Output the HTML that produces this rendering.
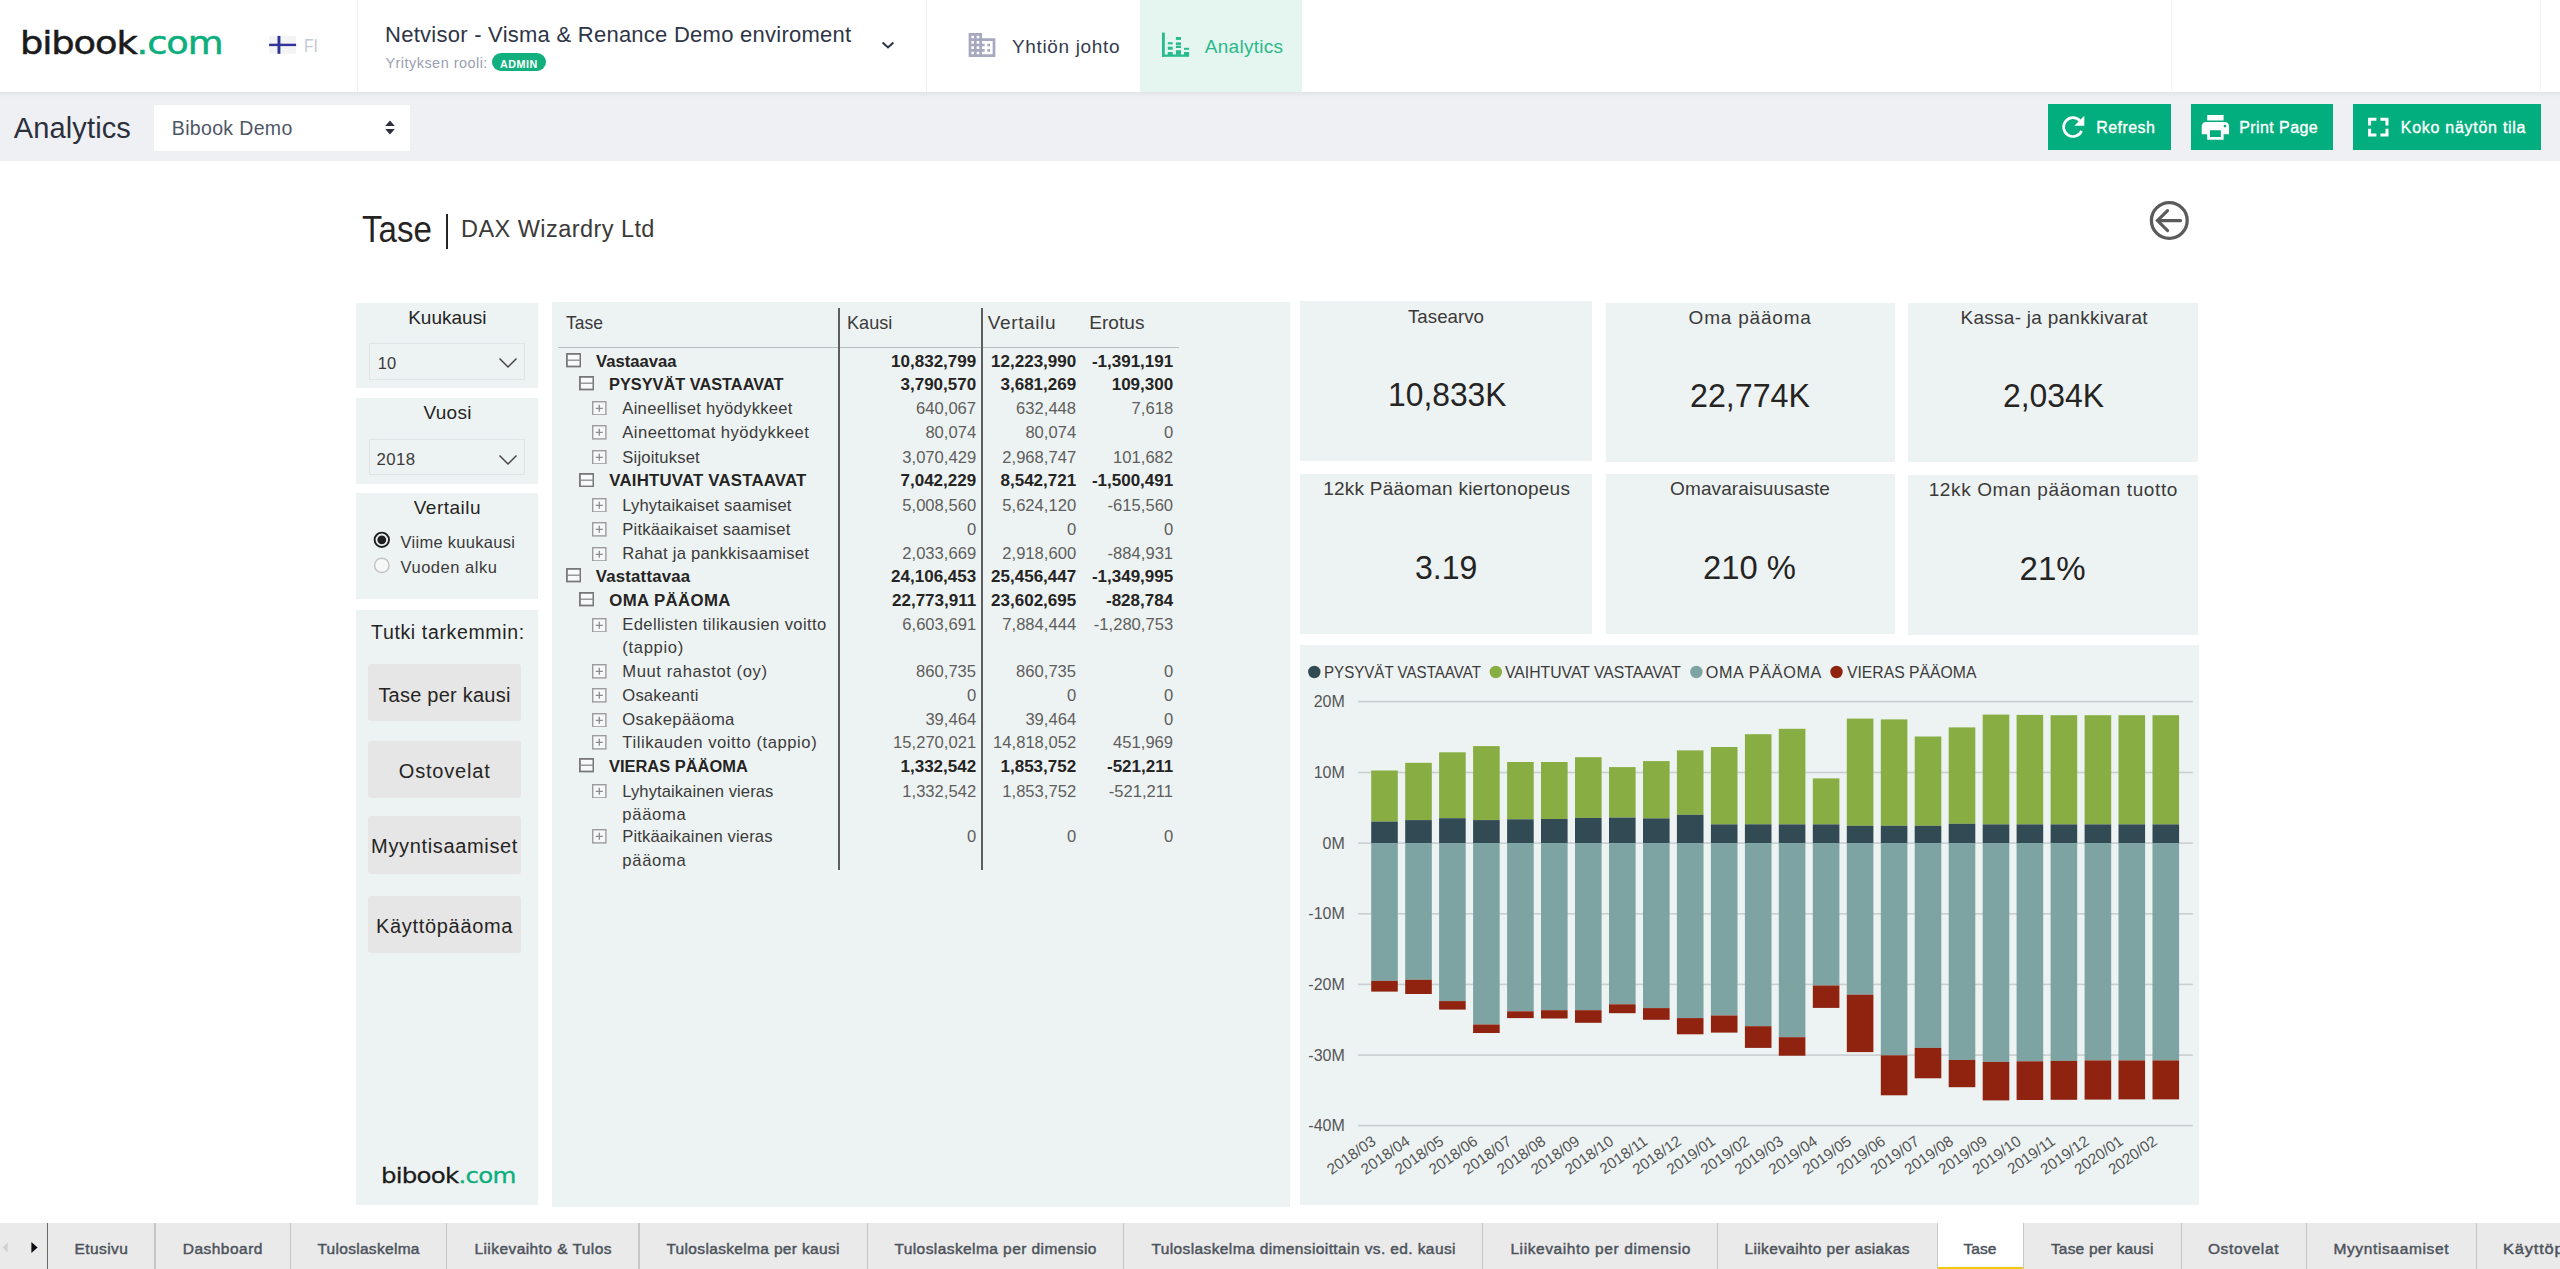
<!DOCTYPE html>
<html lang="fi"><head><meta charset="utf-8"><title>bibook.com – Analytics – Tase</title>
<style>
html,body{margin:0;padding:0}
body{width:2560px;height:1269px;overflow:hidden;background:#fff;position:relative;font-family:"Liberation Sans", sans-serif;}
.abs{position:absolute;display:block}
.t{position:absolute;white-space:pre;line-height:1;transform-origin:0 0}
header,nav,main,section,footer{display:block}
</style></head><body>
<!--HEADER-->
<header>
<div class="abs" style="left:0px;top:0px;width:2560.0px;height:92.0px;background:#fff;"></div>
<div class="abs" style="left:1140px;top:0px;width:162.0px;height:92.0px;background:#e5f6f0;"></div>
<div class="abs" style="left:356.5px;top:0px;width:1.3px;height:92.0px;background:#eef0f4;"></div>
<div class="abs" style="left:925.8px;top:0px;width:1.2px;height:92.0px;background:#eef0f4;"></div>
<div class="abs" style="left:2170.5px;top:0px;width:1.0px;height:92.0px;background:#f4f5f8;"></div>
<div class="abs" style="left:2540px;top:0px;width:1.0px;height:92.0px;background:#f4f5f8;"></div>
<span class="t" style="left:20.1px;top:26.5px;font-size:32.6px;letter-spacing:-0.991px;color:#1b1b1b;-webkit-text-stroke-width:0.5px;transform:scaleX(1.1300);font-family:'DejaVu Sans','Liberation Sans',sans-serif;">bibook<span style="color:#0bae7c">.com</span></span>
<!--flag-->
<svg class="abs" style="left:269px;top:35px" width="28" height="20" viewBox="269 35 28 20"><rect x="269.1" y="35.9" width="27" height="17.9" fill="#f4f4f5"/><rect x="277.5" y="35.9" width="2.9" height="17.9" fill="#30349a"/><rect x="269.1" y="43.7" width="27" height="2.4" fill="#30349a"/></svg>
<!--chevron-->
<svg class="abs" style="left:880px;top:39px" width="16" height="12" viewBox="0 0 16 12"><path d="M2.6 3.4L8 8.4L13.4 3.4" fill="none" stroke="#2f3546" stroke-width="2.1"/></svg>
<svg class="abs" style="left:966.4px;top:28.6px" width="32" height="32" viewBox="0 0 24 24"><path fill="#a5a8be" d="M12 7V3H2v18h20V7H12zM6 19H4v-2h2v2zm0-4H4v-2h2v2zm0-4H4V9h2v2zm0-4H4V5h2v2zm4 12H8v-2h2v2zm0-4H8v-2h2v2zm0-4H8V9h2v2zm0-4H8V5h2v2zm10 12h-8v-2h2v-2h-2v-2h2v-2h-2V9h8v10zm-2-8h-2v2h2v-2zm0 4h-2v2h2v-2z"/></svg>
<svg class="abs" style="left:1160px;top:31px" width="32" height="28" viewBox="1160 31 32 28"><g fill="#27bb8e"><rect x="1162" y="32.6" width="2.8" height="24.2"/><rect x="1162" y="54.5" width="27.1" height="2.3"/><rect x="1167.8" y="42.2" width="4.9" height="2.1"/><rect x="1167.8" y="46.7" width="4.9" height="3"/><rect x="1167.8" y="52" width="4.9" height="3"/><rect x="1175.9" y="37" width="5.1" height="2.9"/><rect x="1175.9" y="42.4" width="5.1" height="2.5"/><rect x="1175.9" y="45.6" width="5.1" height="2.4"/><rect x="1175.9" y="50.2" width="5.1" height="4.6"/><rect x="1184" y="47.8" width="5.1" height="2"/><rect x="1184" y="52" width="5.1" height="3"/></g></svg>
<div class="abs" style="left:492px;top:53px;width:54.0px;height:18.0px;background:#12b07e;border-radius:9px"></div>
<span class="t" style="left:385.1px;top:24.0px;font-size:22px;letter-spacing:0.253px;color:#2f3546;">Netvisor - Visma &amp; Renance Demo enviroment</span>
<span class="t" style="left:385.4px;top:55.5px;font-size:14.5px;letter-spacing:0.461px;color:#9aa0b1;">Yrityksen rooli:</span>
<span class="t" style="left:500.1px;top:59.6px;font-size:10px;font-weight:700;letter-spacing:0.500px;color:#ffffff;transform:scaleX(1.0710);">ADMIN</span>
<span class="t" style="left:303.7px;top:37.4px;font-size:18.3px;color:#c3c9d6;transform:scaleX(0.8484);">FI</span>
<span class="t" style="left:1011.9px;top:36.5px;font-size:19px;letter-spacing:0.661px;color:#353b4e;">Yhtiön johto</span>
<span class="t" style="left:1204.7px;top:36.5px;font-size:19px;letter-spacing:0.300px;color:#2bb98a;">Analytics</span>
</header>
<!--TOOLBAR-->
<nav>
<div class="abs" style="left:0px;top:91.7px;width:2560.0px;height:69.5px;background:#eef0f4;"></div>
<div class="abs" style="left:0px;top:91.7px;width:2560.0px;height:5.3px;background:transparent;background:linear-gradient(rgba(40,50,80,.065),rgba(40,50,80,0))"></div>
<div class="abs" style="left:154px;top:105.4px;width:256.0px;height:45.2px;background:#fff;"></div>
<svg class="abs" style="left:384px;top:119px" width="12" height="17" viewBox="0 0 12 17"><path d="M1.2 7L6 1.6L10.8 7ZM1.2 10L6 15.4L10.8 10Z" fill="#2b303b"/></svg>
<div class="abs" style="left:2048px;top:104px;width:123.3px;height:45.7px;background:#02ae7d;"></div>
<div class="abs" style="left:2191.2px;top:104px;width:142.1px;height:45.7px;background:#02ae7d;"></div>
<div class="abs" style="left:2353px;top:104px;width:187.6px;height:45.7px;background:#02ae7d;"></div>
<svg class="abs" style="left:2058px;top:112px" width="30" height="30" viewBox="2058 112 30 30"><path d="M2080.0 120.8A9.4 9.4 0 1 0 2081.6 130.9" fill="none" stroke="#fff" stroke-width="2.7"/><path d="M2084.3 115.8V125.7H2074.4Z" fill="#fff"/></svg>
<svg class="abs" style="left:2199.4px;top:111px" width="32.8" height="32.8" viewBox="0 0 24 24"><path fill="#fff" d="M19 8H5c-1.66 0-3 1.34-3 3v6h4v4h12v-4h4v-6c0-1.66-1.34-3-3-3zm-3 11H8v-5h8v5zm3-7c-.55 0-1-.45-1-1s.45-1 1-1 1 .45 1 1-.45 1-1 1zm-1-9H6v4h12V3z"/></svg>
<svg class="abs" style="left:2364px;top:114px" width="28" height="26" viewBox="2364 114 28 26"><path d="M2369.6 125.6V119.3H2376.4M2380.4 119.3H2387V125.6M2387 128.8V134.9H2380.4M2376.4 134.9H2369.6V128.8" fill="none" stroke="#fff" stroke-width="3"/></svg>
<span class="t" style="left:13.8px;top:114.0px;font-size:29px;letter-spacing:0.123px;color:#2b303b;">Analytics</span>
<span class="t" style="left:171.8px;top:119.0px;font-size:19.5px;letter-spacing:0.340px;color:#4e5666;">Bibook Demo</span>
<span class="t" style="left:2096.2px;top:120.4px;font-size:16px;letter-spacing:0.431px;color:#ffffff;-webkit-text-stroke-width:0.35px;">Refresh</span>
<span class="t" style="left:2239.2px;top:120.4px;font-size:16px;letter-spacing:0.422px;color:#ffffff;-webkit-text-stroke-width:0.35px;">Print Page</span>
<span class="t" style="left:2400.8px;top:120.4px;font-size:16px;letter-spacing:0.724px;color:#ffffff;-webkit-text-stroke-width:0.35px;">Koko näytön tila</span>
</nav>
<main>
<!--TITLE-->
<div class="abs" style="left:445.6px;top:213.8px;width:2.2px;height:35.5px;background:#252423;"></div>
<svg class="abs" style="left:2147px;top:198px" width="45" height="45" viewBox="2147 198 45 45"><circle cx="2169.3" cy="220.5" r="17.9" fill="none" stroke="#5b5b5b" stroke-width="3.3"/><path d="M2180.6 220.6H2157.6M2167.6 210.6L2157.4 220.6L2167.6 230.6" fill="none" stroke="#5b5b5b" stroke-width="3.1" stroke-linecap="round" stroke-linejoin="miter"/></svg>
<!--SLICERS-->
<section>
<div class="abs" style="left:356px;top:302.5px;width:181.5px;height:85.5px;background:#edf3f3;"></div>
<div class="abs" style="left:369px;top:343.3px;width:155.8px;height:37.0px;background:transparent;box-sizing:border-box;border:1px solid #dfe5e7"></div>
<div class="abs" style="left:356px;top:398.4px;width:181.5px;height:85.7px;background:#edf3f3;"></div>
<div class="abs" style="left:369px;top:439.4px;width:155.8px;height:36.0px;background:transparent;box-sizing:border-box;border:1px solid #dfe5e7"></div>
<div class="abs" style="left:356px;top:492.7px;width:181.5px;height:106.1px;background:#edf3f3;"></div>
<div class="abs" style="left:356px;top:610px;width:181.5px;height:595.3px;background:#edf3f3;"></div>
<div class="abs" style="left:368px;top:664.2px;width:153.3px;height:56.8px;background:#e6e6e6;border-radius:3px"></div>
<div class="abs" style="left:368px;top:740.9px;width:153.3px;height:57.4px;background:#e6e6e6;border-radius:3px"></div>
<div class="abs" style="left:368px;top:816.4px;width:153.3px;height:57.2px;background:#e6e6e6;border-radius:3px"></div>
<div class="abs" style="left:368px;top:896px;width:153.3px;height:56.9px;background:#e6e6e6;border-radius:3px"></div>
<svg class="abs" style="left:497px;top:355px" width="22" height="15" viewBox="0 0 22 15"><path d="M2.5 3.5L11 12L19.5 3.5" fill="none" stroke="#484644" stroke-width="1.5"/></svg>
<svg class="abs" style="left:496.5px;top:451.5px" width="22" height="15" viewBox="0 0 22 15"><path d="M2.5 3.5L11 12L19.5 3.5" fill="none" stroke="#484644" stroke-width="1.5"/></svg>
<svg class="abs" style="left:372px;top:530px" width="20" height="46" viewBox="372 530 20 46"><circle cx="381.8" cy="539.8" r="7.2" fill="#edf3f3" stroke="#1f1f1f" stroke-width="1.9"/><circle cx="381.8" cy="539.8" r="4.4" fill="#1f1f1f"/><circle cx="381.8" cy="565.4" r="7.2" fill="#f6f8f8" stroke="#c4c4c4" stroke-width="1.5"/></svg>
<span class="t" style="left:362.1px;top:210.5px;font-size:37.5px;color:#252423;transform:scaleX(0.8826);">Tase</span>
<span class="t" style="left:461.1px;top:218.2px;font-size:23.5px;letter-spacing:0.440px;color:#3b3a39;">DAX Wizardry Ltd</span>
<span class="t" style="left:408.2px;top:307.5px;font-size:19px;color:#252423;">Kuukausi</span>
<span class="t" style="left:377.8px;top:355.2px;font-size:16.5px;color:#3b3a39;">10</span>
<span class="t" style="left:423.4px;top:402.9px;font-size:19px;letter-spacing:0.300px;color:#252423;">Vuosi</span>
<span class="t" style="left:376.5px;top:452.0px;font-size:16.8px;letter-spacing:0.377px;color:#3b3a39;">2018</span>
<span class="t" style="left:413.7px;top:497.6px;font-size:19px;letter-spacing:0.508px;color:#252423;">Vertailu</span>
<span class="t" style="left:400.5px;top:533.6px;font-size:16.5px;letter-spacing:0.291px;color:#3b3a39;">Viime kuukausi</span>
<span class="t" style="left:400.5px;top:559.0px;font-size:16.5px;letter-spacing:0.531px;color:#3b3a39;">Vuoden alku</span>
<span class="t" style="left:371.1px;top:622.8px;font-size:19.5px;letter-spacing:0.638px;color:#252423;">Tutki tarkemmin:</span>
<span class="t" style="left:378.4px;top:684.5px;font-size:20px;letter-spacing:0.233px;color:#252423;">Tase per kausi</span>
<span class="t" style="left:398.8px;top:760.9px;font-size:20px;letter-spacing:0.802px;color:#252423;">Ostovelat</span>
<span class="t" style="left:371.1px;top:836.2px;font-size:20px;letter-spacing:0.653px;color:#252423;">Myyntisaamiset</span>
<span class="t" style="left:376.0px;top:915.5px;font-size:20px;letter-spacing:0.683px;color:#252423;">Käyttöpääoma</span>
<span class="t" style="left:380.9px;top:1164.6px;font-size:21.7px;letter-spacing:-0.681px;color:#1b1b1b;-webkit-text-stroke-width:0.3px;transform:scaleX(1.1300);font-family:'DejaVu Sans','Liberation Sans',sans-serif;">bibook<span style="color:#0bae7c">.com</span></span>
</section>
<!--TABLE-->
<section>
<div class="abs" style="left:551.5px;top:301.5px;width:738.5px;height:905.5px;background:#edf3f3;"></div>
<div class="abs" style="left:558px;top:346.7px;width:621.3px;height:1.3px;background:#b9bfc1;"></div>
<div class="abs" style="left:837.7px;top:307.8px;width:2.1px;height:562.0px;background:#5e5e5e;"></div>
<div class="abs" style="left:981.2px;top:307.8px;width:2.1px;height:562.0px;background:#5e5e5e;"></div>
<svg class="abs" style="left:565.7px;top:353.2px" width="15.3" height="14.4" viewBox="0 0 15.3 14.4"><rect x="0.9" y="0.9" width="13.5" height="12.6" fill="#f7fafa" stroke="#787878" stroke-width="1.8"/><path d="M1 7.2H14.3" stroke="#8a8a8a" stroke-width="1.3"/></svg>
<svg class="abs" style="left:579.0px;top:376.3px" width="15.3" height="14.4" viewBox="0 0 15.3 14.4"><rect x="0.9" y="0.9" width="13.5" height="12.6" fill="#f7fafa" stroke="#787878" stroke-width="1.8"/><path d="M1 7.2H14.3" stroke="#8a8a8a" stroke-width="1.3"/></svg>
<svg class="abs" style="left:592.3px;top:400.7px" width="14.6" height="14.6" viewBox="0 0 14.6 14.6"><rect x="0.7" y="0.7" width="13.2" height="13.2" fill="#f5f8f8" stroke="#9c9c9c" stroke-width="1.4"/><path d="M3.8 7.3H10.8M7.3 3.8V10.8" stroke="#8c8c8c" stroke-width="1.3"/></svg>
<svg class="abs" style="left:592.3px;top:425.4px" width="14.6" height="14.6" viewBox="0 0 14.6 14.6"><rect x="0.7" y="0.7" width="13.2" height="13.2" fill="#f5f8f8" stroke="#9c9c9c" stroke-width="1.4"/><path d="M3.8 7.3H10.8M7.3 3.8V10.8" stroke="#8c8c8c" stroke-width="1.3"/></svg>
<svg class="abs" style="left:592.3px;top:449.8px" width="14.6" height="14.6" viewBox="0 0 14.6 14.6"><rect x="0.7" y="0.7" width="13.2" height="13.2" fill="#f5f8f8" stroke="#9c9c9c" stroke-width="1.4"/><path d="M3.8 7.3H10.8M7.3 3.8V10.8" stroke="#8c8c8c" stroke-width="1.3"/></svg>
<svg class="abs" style="left:579.0px;top:472.8px" width="15.3" height="14.4" viewBox="0 0 15.3 14.4"><rect x="0.9" y="0.9" width="13.5" height="12.6" fill="#f7fafa" stroke="#787878" stroke-width="1.8"/><path d="M1 7.2H14.3" stroke="#8a8a8a" stroke-width="1.3"/></svg>
<svg class="abs" style="left:592.3px;top:497.9px" width="14.6" height="14.6" viewBox="0 0 14.6 14.6"><rect x="0.7" y="0.7" width="13.2" height="13.2" fill="#f5f8f8" stroke="#9c9c9c" stroke-width="1.4"/><path d="M3.8 7.3H10.8M7.3 3.8V10.8" stroke="#8c8c8c" stroke-width="1.3"/></svg>
<svg class="abs" style="left:592.3px;top:522.4px" width="14.6" height="14.6" viewBox="0 0 14.6 14.6"><rect x="0.7" y="0.7" width="13.2" height="13.2" fill="#f5f8f8" stroke="#9c9c9c" stroke-width="1.4"/><path d="M3.8 7.3H10.8M7.3 3.8V10.8" stroke="#8c8c8c" stroke-width="1.3"/></svg>
<svg class="abs" style="left:592.3px;top:546.5px" width="14.6" height="14.6" viewBox="0 0 14.6 14.6"><rect x="0.7" y="0.7" width="13.2" height="13.2" fill="#f5f8f8" stroke="#9c9c9c" stroke-width="1.4"/><path d="M3.8 7.3H10.8M7.3 3.8V10.8" stroke="#8c8c8c" stroke-width="1.3"/></svg>
<svg class="abs" style="left:565.7px;top:568.3px" width="15.3" height="14.4" viewBox="0 0 15.3 14.4"><rect x="0.9" y="0.9" width="13.5" height="12.6" fill="#f7fafa" stroke="#787878" stroke-width="1.8"/><path d="M1 7.2H14.3" stroke="#8a8a8a" stroke-width="1.3"/></svg>
<svg class="abs" style="left:579.0px;top:592.2px" width="15.3" height="14.4" viewBox="0 0 15.3 14.4"><rect x="0.9" y="0.9" width="13.5" height="12.6" fill="#f7fafa" stroke="#787878" stroke-width="1.8"/><path d="M1 7.2H14.3" stroke="#8a8a8a" stroke-width="1.3"/></svg>
<svg class="abs" style="left:592.3px;top:617.6px" width="14.6" height="14.6" viewBox="0 0 14.6 14.6"><rect x="0.7" y="0.7" width="13.2" height="13.2" fill="#f5f8f8" stroke="#9c9c9c" stroke-width="1.4"/><path d="M3.8 7.3H10.8M7.3 3.8V10.8" stroke="#8c8c8c" stroke-width="1.3"/></svg>
<svg class="abs" style="left:592.3px;top:664.0px" width="14.6" height="14.6" viewBox="0 0 14.6 14.6"><rect x="0.7" y="0.7" width="13.2" height="13.2" fill="#f5f8f8" stroke="#9c9c9c" stroke-width="1.4"/><path d="M3.8 7.3H10.8M7.3 3.8V10.8" stroke="#8c8c8c" stroke-width="1.3"/></svg>
<svg class="abs" style="left:592.3px;top:688.3px" width="14.6" height="14.6" viewBox="0 0 14.6 14.6"><rect x="0.7" y="0.7" width="13.2" height="13.2" fill="#f5f8f8" stroke="#9c9c9c" stroke-width="1.4"/><path d="M3.8 7.3H10.8M7.3 3.8V10.8" stroke="#8c8c8c" stroke-width="1.3"/></svg>
<svg class="abs" style="left:592.3px;top:712.6px" width="14.6" height="14.6" viewBox="0 0 14.6 14.6"><rect x="0.7" y="0.7" width="13.2" height="13.2" fill="#f5f8f8" stroke="#9c9c9c" stroke-width="1.4"/><path d="M3.8 7.3H10.8M7.3 3.8V10.8" stroke="#8c8c8c" stroke-width="1.3"/></svg>
<svg class="abs" style="left:592.3px;top:735.2px" width="14.6" height="14.6" viewBox="0 0 14.6 14.6"><rect x="0.7" y="0.7" width="13.2" height="13.2" fill="#f5f8f8" stroke="#9c9c9c" stroke-width="1.4"/><path d="M3.8 7.3H10.8M7.3 3.8V10.8" stroke="#8c8c8c" stroke-width="1.3"/></svg>
<svg class="abs" style="left:579.0px;top:758.4px" width="15.3" height="14.4" viewBox="0 0 15.3 14.4"><rect x="0.9" y="0.9" width="13.5" height="12.6" fill="#f7fafa" stroke="#787878" stroke-width="1.8"/><path d="M1 7.2H14.3" stroke="#8a8a8a" stroke-width="1.3"/></svg>
<svg class="abs" style="left:592.3px;top:783.7px" width="14.6" height="14.6" viewBox="0 0 14.6 14.6"><rect x="0.7" y="0.7" width="13.2" height="13.2" fill="#f5f8f8" stroke="#9c9c9c" stroke-width="1.4"/><path d="M3.8 7.3H10.8M7.3 3.8V10.8" stroke="#8c8c8c" stroke-width="1.3"/></svg>
<svg class="abs" style="left:592.3px;top:829.3px" width="14.6" height="14.6" viewBox="0 0 14.6 14.6"><rect x="0.7" y="0.7" width="13.2" height="13.2" fill="#f5f8f8" stroke="#9c9c9c" stroke-width="1.4"/><path d="M3.8 7.3H10.8M7.3 3.8V10.8" stroke="#8c8c8c" stroke-width="1.3"/></svg>
<span class="t" style="left:565.6px;top:312.6px;font-size:19px;color:#3b3a39;transform:scaleX(0.9199);">Tase</span>
<span class="t" style="left:846.8px;top:312.6px;font-size:19px;color:#3b3a39;transform:scaleX(0.9524);">Kausi</span>
<span class="t" style="left:987.8px;top:312.6px;font-size:19px;letter-spacing:0.622px;color:#3b3a39;">Vertailu</span>
<span class="t" style="left:1089.2px;top:312.6px;font-size:19px;letter-spacing:0.082px;color:#3b3a39;">Erotus</span>
<span class="t" style="left:595.7px;top:353.7px;font-size:16.8px;font-weight:700;color:#252423;transform:scaleX(0.9924);">Vastaavaa</span>
<span class="t" style="left:891.1px;top:352.7px;font-size:17px;font-weight:700;color:#252423;">10,832,799</span>
<span class="t" style="left:991.1px;top:352.7px;font-size:17px;font-weight:700;color:#252423;">12,223,990</span>
<span class="t" style="left:1091.9px;top:352.7px;font-size:17px;font-weight:700;color:#252423;">-1,391,191</span>
<span class="t" style="left:609.3px;top:376.8px;font-size:16.8px;font-weight:700;color:#252423;transform:scaleX(0.9728);">PYSYVÄT VASTAAVAT</span>
<span class="t" style="left:900.5px;top:375.8px;font-size:17px;font-weight:700;color:#252423;">3,790,570</span>
<span class="t" style="left:1000.5px;top:375.8px;font-size:17px;font-weight:700;color:#252423;">3,681,269</span>
<span class="t" style="left:1111.7px;top:375.8px;font-size:17px;font-weight:700;color:#252423;">109,300</span>
<span class="t" style="left:622.3px;top:400.5px;font-size:16.6px;letter-spacing:0.285px;color:#3b3a39;">Aineelliset hyödykkeet</span>
<span class="t" style="left:916.1px;top:400.5px;font-size:16.6px;color:#605e5c;">640,067</span>
<span class="t" style="left:1016.1px;top:400.5px;font-size:16.6px;color:#605e5c;">632,448</span>
<span class="t" style="left:1131.6px;top:400.5px;font-size:16.6px;color:#605e5c;">7,618</span>
<span class="t" style="left:622.3px;top:425.2px;font-size:16.6px;letter-spacing:0.450px;color:#3b3a39;">Aineettomat hyödykkeet</span>
<span class="t" style="left:925.4px;top:425.2px;font-size:16.6px;color:#605e5c;">80,074</span>
<span class="t" style="left:1025.4px;top:425.2px;font-size:16.6px;color:#605e5c;">80,074</span>
<span class="t" style="left:1163.9px;top:425.2px;font-size:16.6px;color:#605e5c;">0</span>
<span class="t" style="left:622.3px;top:449.6px;font-size:16.6px;letter-spacing:0.172px;color:#3b3a39;">Sijoitukset</span>
<span class="t" style="left:902.3px;top:449.6px;font-size:16.6px;color:#605e5c;">3,070,429</span>
<span class="t" style="left:1002.3px;top:449.6px;font-size:16.6px;color:#605e5c;">2,968,747</span>
<span class="t" style="left:1113.1px;top:449.6px;font-size:16.6px;color:#605e5c;">101,682</span>
<span class="t" style="left:609.3px;top:473.3px;font-size:16.8px;font-weight:700;letter-spacing:0.205px;color:#252423;">VAIHTUVAT VASTAAVAT</span>
<span class="t" style="left:900.5px;top:472.3px;font-size:17px;font-weight:700;color:#252423;">7,042,229</span>
<span class="t" style="left:1000.5px;top:472.3px;font-size:17px;font-weight:700;color:#252423;">8,542,721</span>
<span class="t" style="left:1091.9px;top:472.3px;font-size:17px;font-weight:700;color:#252423;">-1,500,491</span>
<span class="t" style="left:622.3px;top:497.7px;font-size:16.6px;letter-spacing:0.135px;color:#3b3a39;">Lyhytaikaiset saamiset</span>
<span class="t" style="left:902.3px;top:497.7px;font-size:16.6px;color:#605e5c;">5,008,560</span>
<span class="t" style="left:1002.3px;top:497.7px;font-size:16.6px;color:#605e5c;">5,624,120</span>
<span class="t" style="left:1107.6px;top:497.7px;font-size:16.6px;color:#605e5c;">-615,560</span>
<span class="t" style="left:622.3px;top:522.2px;font-size:16.6px;letter-spacing:0.185px;color:#3b3a39;">Pitkäaikaiset saamiset</span>
<span class="t" style="left:966.9px;top:522.2px;font-size:16.6px;color:#605e5c;">0</span>
<span class="t" style="left:1066.9px;top:522.2px;font-size:16.6px;color:#605e5c;">0</span>
<span class="t" style="left:1163.9px;top:522.2px;font-size:16.6px;color:#605e5c;">0</span>
<span class="t" style="left:622.3px;top:546.3px;font-size:16.6px;letter-spacing:0.263px;color:#3b3a39;">Rahat ja pankkisaamiset</span>
<span class="t" style="left:902.3px;top:546.3px;font-size:16.6px;color:#605e5c;">2,033,669</span>
<span class="t" style="left:1002.3px;top:546.3px;font-size:16.6px;color:#605e5c;">2,918,600</span>
<span class="t" style="left:1107.6px;top:546.3px;font-size:16.6px;color:#605e5c;">-884,931</span>
<span class="t" style="left:595.7px;top:568.8px;font-size:16.8px;font-weight:700;letter-spacing:0.210px;color:#252423;">Vastattavaa</span>
<span class="t" style="left:891.1px;top:567.8px;font-size:17px;font-weight:700;color:#252423;">24,106,453</span>
<span class="t" style="left:991.1px;top:567.8px;font-size:17px;font-weight:700;color:#252423;">25,456,447</span>
<span class="t" style="left:1091.9px;top:567.8px;font-size:17px;font-weight:700;color:#252423;">-1,349,995</span>
<span class="t" style="left:609.3px;top:592.7px;font-size:16.8px;font-weight:700;letter-spacing:0.366px;color:#252423;">OMA PÄÄOMA</span>
<span class="t" style="left:892.0px;top:591.7px;font-size:17px;font-weight:700;color:#252423;">22,773,911</span>
<span class="t" style="left:991.1px;top:591.7px;font-size:17px;font-weight:700;color:#252423;">23,602,695</span>
<span class="t" style="left:1106.0px;top:591.7px;font-size:17px;font-weight:700;color:#252423;">-828,784</span>
<span class="t" style="left:622.3px;top:617.4px;font-size:16.6px;letter-spacing:0.363px;color:#3b3a39;">Edellisten tilikausien voitto</span>
<span class="t" style="left:622.3px;top:640.4px;font-size:16.6px;letter-spacing:0.657px;color:#3b3a39;">(tappio)</span>
<span class="t" style="left:902.3px;top:617.4px;font-size:16.6px;color:#605e5c;">6,603,691</span>
<span class="t" style="left:1002.3px;top:617.4px;font-size:16.6px;color:#605e5c;">7,884,444</span>
<span class="t" style="left:1093.8px;top:617.4px;font-size:16.6px;color:#605e5c;">-1,280,753</span>
<span class="t" style="left:622.3px;top:663.8px;font-size:16.6px;letter-spacing:0.589px;color:#3b3a39;">Muut rahastot (oy)</span>
<span class="t" style="left:916.1px;top:663.8px;font-size:16.6px;color:#605e5c;">860,735</span>
<span class="t" style="left:1016.1px;top:663.8px;font-size:16.6px;color:#605e5c;">860,735</span>
<span class="t" style="left:1163.9px;top:663.8px;font-size:16.6px;color:#605e5c;">0</span>
<span class="t" style="left:622.3px;top:688.1px;font-size:16.6px;letter-spacing:0.180px;color:#3b3a39;">Osakeanti</span>
<span class="t" style="left:966.9px;top:688.1px;font-size:16.6px;color:#605e5c;">0</span>
<span class="t" style="left:1066.9px;top:688.1px;font-size:16.6px;color:#605e5c;">0</span>
<span class="t" style="left:1163.9px;top:688.1px;font-size:16.6px;color:#605e5c;">0</span>
<span class="t" style="left:622.3px;top:712.4px;font-size:16.6px;letter-spacing:0.412px;color:#3b3a39;">Osakepääoma</span>
<span class="t" style="left:925.4px;top:712.4px;font-size:16.6px;color:#605e5c;">39,464</span>
<span class="t" style="left:1025.4px;top:712.4px;font-size:16.6px;color:#605e5c;">39,464</span>
<span class="t" style="left:1163.9px;top:712.4px;font-size:16.6px;color:#605e5c;">0</span>
<span class="t" style="left:622.3px;top:735.0px;font-size:16.6px;letter-spacing:0.568px;color:#3b3a39;">Tilikauden voitto (tappio)</span>
<span class="t" style="left:893.1px;top:735.0px;font-size:16.6px;color:#605e5c;">15,270,021</span>
<span class="t" style="left:993.1px;top:735.0px;font-size:16.6px;color:#605e5c;">14,818,052</span>
<span class="t" style="left:1113.1px;top:735.0px;font-size:16.6px;color:#605e5c;">451,969</span>
<span class="t" style="left:609.3px;top:758.9px;font-size:16.8px;font-weight:700;color:#252423;transform:scaleX(0.9797);">VIERAS PÄÄOMA</span>
<span class="t" style="left:900.5px;top:757.9px;font-size:17px;font-weight:700;color:#252423;">1,332,542</span>
<span class="t" style="left:1000.5px;top:757.9px;font-size:17px;font-weight:700;color:#252423;">1,853,752</span>
<span class="t" style="left:1107.0px;top:757.9px;font-size:17px;font-weight:700;color:#252423;">-521,211</span>
<span class="t" style="left:622.3px;top:783.5px;font-size:16.6px;letter-spacing:0.070px;color:#3b3a39;">Lyhytaikainen vieras</span>
<span class="t" style="left:622.3px;top:806.5px;font-size:16.6px;letter-spacing:0.699px;color:#3b3a39;">pääoma</span>
<span class="t" style="left:902.3px;top:783.5px;font-size:16.6px;color:#605e5c;">1,332,542</span>
<span class="t" style="left:1002.3px;top:783.5px;font-size:16.6px;color:#605e5c;">1,853,752</span>
<span class="t" style="left:1108.8px;top:783.5px;font-size:16.6px;color:#605e5c;">-521,211</span>
<span class="t" style="left:622.3px;top:829.1px;font-size:16.6px;letter-spacing:0.136px;color:#3b3a39;">Pitkäaikainen vieras</span>
<span class="t" style="left:622.3px;top:852.5px;font-size:16.6px;letter-spacing:0.699px;color:#3b3a39;">pääoma</span>
<span class="t" style="left:966.9px;top:829.1px;font-size:16.6px;color:#605e5c;">0</span>
<span class="t" style="left:1066.9px;top:829.1px;font-size:16.6px;color:#605e5c;">0</span>
<span class="t" style="left:1163.9px;top:829.1px;font-size:16.6px;color:#605e5c;">0</span>
</section>
<!--KPI-->
<section>
<div class="abs" style="left:1300px;top:301.3px;width:292.0px;height:159.7px;background:#edf3f3;"></div>
<div class="abs" style="left:1606.2px;top:302.8px;width:288.4px;height:159.4px;background:#edf3f3;"></div>
<div class="abs" style="left:1908.2px;top:302.8px;width:290.0px;height:159.4px;background:#edf3f3;"></div>
<div class="abs" style="left:1300px;top:473.8px;width:292.0px;height:160.0px;background:#edf3f3;"></div>
<div class="abs" style="left:1606.2px;top:474.2px;width:288.4px;height:159.6px;background:#edf3f3;"></div>
<div class="abs" style="left:1908.2px;top:475.2px;width:290.0px;height:159.5px;background:#edf3f3;"></div>
<span class="t" style="left:1408.3px;top:306.6px;font-size:19px;color:#3b3a39;transform:scaleX(0.9858);">Tasearvo</span>
<span class="t" style="left:1387.9px;top:378.3px;font-size:33px;color:#252423;transform:scaleX(0.9640);">10,833K</span>
<span class="t" style="left:1688.6px;top:308.0px;font-size:19px;letter-spacing:0.801px;color:#3b3a39;">Oma pääoma</span>
<span class="t" style="left:1690.0px;top:378.9px;font-size:33px;color:#252423;transform:scaleX(0.9756);">22,774K</span>
<span class="t" style="left:1960.5px;top:308.0px;font-size:19px;letter-spacing:0.269px;color:#3b3a39;">Kassa- ja pankkivarat</span>
<span class="t" style="left:2002.5px;top:378.9px;font-size:33px;color:#252423;transform:scaleX(0.9659);">2,034K</span>
<span class="t" style="left:1323.2px;top:478.8px;font-size:19px;letter-spacing:0.246px;color:#3b3a39;">12kk Pääoman kiertonopeus</span>
<span class="t" style="left:1414.9px;top:550.5px;font-size:33px;color:#252423;transform:scaleX(0.9705);">3.19</span>
<span class="t" style="left:1670.1px;top:478.8px;font-size:19px;letter-spacing:0.095px;color:#3b3a39;">Omavaraisuusaste</span>
<span class="t" style="left:1703.4px;top:550.5px;font-size:33px;color:#252423;transform:scaleX(0.9927);">210 %</span>
<span class="t" style="left:1928.7px;top:480.2px;font-size:19px;letter-spacing:0.619px;color:#3b3a39;">12kk Oman pääoman tuotto</span>
<span class="t" style="left:2019.6px;top:552.0px;font-size:33px;letter-spacing:0.024px;color:#252423;">21%</span>
</section>
<!--CHART-->
<section>
<div class="abs" style="left:1300px;top:645px;width:899.0px;height:560.4px;background:#edf3f3;"></div>
<svg class="abs" style="left:1300px;top:645px" width="899" height="560.5" viewBox="1300 645 899 560.5" font-family='"Liberation Sans", sans-serif'>
<rect x="1358" y="700.8" width="834.8" height="1.6" fill="#c9ced0"/>
<rect x="1358" y="771.7" width="834.8" height="1.6" fill="#c9ced0"/>
<rect x="1358" y="842.3" width="834.8" height="1.6" fill="#c9ced0"/>
<rect x="1358" y="913.0" width="834.8" height="1.6" fill="#c9ced0"/>
<rect x="1358" y="983.6" width="834.8" height="1.6" fill="#c9ced0"/>
<rect x="1358" y="1054.3" width="834.8" height="1.6" fill="#c9ced0"/>
<rect x="1358" y="1124.8" width="834.8" height="1.6" fill="#c9ced0"/>
<rect x="1371.2" y="770.5" width="26.6" height="51.1" fill="#88ad42"/><rect x="1371.2" y="821.6" width="26.6" height="21.5" fill="#324a53"/><rect x="1371.2" y="843.1" width="26.6" height="137.8" fill="#7da4a2"/><rect x="1371.2" y="980.9" width="26.6" height="10.7" fill="#8f2310"/>
<rect x="1405.2" y="762.8" width="26.6" height="57.3" fill="#88ad42"/><rect x="1405.2" y="820.1" width="26.6" height="23.0" fill="#324a53"/><rect x="1405.2" y="843.1" width="26.6" height="136.7" fill="#7da4a2"/><rect x="1405.2" y="979.8" width="26.6" height="14.2" fill="#8f2310"/>
<rect x="1439.1" y="752.3" width="26.6" height="65.9" fill="#88ad42"/><rect x="1439.1" y="818.2" width="26.6" height="24.9" fill="#324a53"/><rect x="1439.1" y="843.1" width="26.6" height="158.0" fill="#7da4a2"/><rect x="1439.1" y="1001.1" width="26.6" height="8.5" fill="#8f2310"/>
<rect x="1473.1" y="746.1" width="26.6" height="74.0" fill="#88ad42"/><rect x="1473.1" y="820.1" width="26.6" height="23.0" fill="#324a53"/><rect x="1473.1" y="843.1" width="26.6" height="181.4" fill="#7da4a2"/><rect x="1473.1" y="1024.5" width="26.6" height="8.5" fill="#8f2310"/>
<rect x="1507.1" y="762.0" width="26.6" height="57.3" fill="#88ad42"/><rect x="1507.1" y="819.3" width="26.6" height="23.8" fill="#324a53"/><rect x="1507.1" y="843.1" width="26.6" height="168.2" fill="#7da4a2"/><rect x="1507.1" y="1011.3" width="26.6" height="6.8" fill="#8f2310"/>
<rect x="1541.0" y="762.0" width="26.6" height="57.0" fill="#88ad42"/><rect x="1541.0" y="819.0" width="26.6" height="24.1" fill="#324a53"/><rect x="1541.0" y="843.1" width="26.6" height="167.1" fill="#7da4a2"/><rect x="1541.0" y="1010.2" width="26.6" height="8.3" fill="#8f2310"/>
<rect x="1575.0" y="757.2" width="26.6" height="60.7" fill="#88ad42"/><rect x="1575.0" y="817.9" width="26.6" height="25.2" fill="#324a53"/><rect x="1575.0" y="843.1" width="26.6" height="167.1" fill="#7da4a2"/><rect x="1575.0" y="1010.2" width="26.6" height="12.6" fill="#8f2310"/>
<rect x="1609.0" y="767.1" width="26.6" height="50.5" fill="#88ad42"/><rect x="1609.0" y="817.6" width="26.6" height="25.5" fill="#324a53"/><rect x="1609.0" y="843.1" width="26.6" height="161.2" fill="#7da4a2"/><rect x="1609.0" y="1004.3" width="26.6" height="8.9" fill="#8f2310"/>
<rect x="1643.0" y="761.1" width="26.6" height="57.3" fill="#88ad42"/><rect x="1643.0" y="818.4" width="26.6" height="24.7" fill="#324a53"/><rect x="1643.0" y="843.1" width="26.6" height="165.0" fill="#7da4a2"/><rect x="1643.0" y="1008.1" width="26.6" height="11.7" fill="#8f2310"/>
<rect x="1676.9" y="750.4" width="26.6" height="64.4" fill="#88ad42"/><rect x="1676.9" y="814.8" width="26.6" height="28.3" fill="#324a53"/><rect x="1676.9" y="843.1" width="26.6" height="175.0" fill="#7da4a2"/><rect x="1676.9" y="1018.1" width="26.6" height="16.2" fill="#8f2310"/>
<rect x="1710.9" y="747.0" width="26.6" height="77.4" fill="#88ad42"/><rect x="1710.9" y="824.4" width="26.6" height="18.7" fill="#324a53"/><rect x="1710.9" y="843.1" width="26.6" height="172.4" fill="#7da4a2"/><rect x="1710.9" y="1015.5" width="26.6" height="17.1" fill="#8f2310"/>
<rect x="1744.9" y="734.2" width="26.6" height="90.1" fill="#88ad42"/><rect x="1744.9" y="824.3" width="26.6" height="18.8" fill="#324a53"/><rect x="1744.9" y="843.1" width="26.6" height="183.1" fill="#7da4a2"/><rect x="1744.9" y="1026.2" width="26.6" height="21.7" fill="#8f2310"/>
<rect x="1778.8" y="728.8" width="26.6" height="95.6" fill="#88ad42"/><rect x="1778.8" y="824.4" width="26.6" height="18.7" fill="#324a53"/><rect x="1778.8" y="843.1" width="26.6" height="194.1" fill="#7da4a2"/><rect x="1778.8" y="1037.2" width="26.6" height="18.5" fill="#8f2310"/>
<rect x="1812.8" y="778.4" width="26.6" height="46.0" fill="#88ad42"/><rect x="1812.8" y="824.4" width="26.6" height="18.7" fill="#324a53"/><rect x="1812.8" y="843.1" width="26.6" height="142.4" fill="#7da4a2"/><rect x="1812.8" y="985.5" width="26.6" height="22.4" fill="#8f2310"/>
<rect x="1846.8" y="718.6" width="26.6" height="107.2" fill="#88ad42"/><rect x="1846.8" y="825.8" width="26.6" height="17.3" fill="#324a53"/><rect x="1846.8" y="843.1" width="26.6" height="151.6" fill="#7da4a2"/><rect x="1846.8" y="994.7" width="26.6" height="57.4" fill="#8f2310"/>
<rect x="1880.8" y="719.4" width="26.6" height="106.4" fill="#88ad42"/><rect x="1880.8" y="825.8" width="26.6" height="17.3" fill="#324a53"/><rect x="1880.8" y="843.1" width="26.6" height="212.2" fill="#7da4a2"/><rect x="1880.8" y="1055.3" width="26.6" height="40.0" fill="#8f2310"/>
<rect x="1914.7" y="736.5" width="26.6" height="89.3" fill="#88ad42"/><rect x="1914.7" y="825.8" width="26.6" height="17.3" fill="#324a53"/><rect x="1914.7" y="843.1" width="26.6" height="204.8" fill="#7da4a2"/><rect x="1914.7" y="1047.9" width="26.6" height="30.4" fill="#8f2310"/>
<rect x="1948.7" y="727.4" width="26.6" height="96.4" fill="#88ad42"/><rect x="1948.7" y="823.8" width="26.6" height="19.3" fill="#324a53"/><rect x="1948.7" y="843.1" width="26.6" height="216.9" fill="#7da4a2"/><rect x="1948.7" y="1060.0" width="26.6" height="27.2" fill="#8f2310"/>
<rect x="1982.7" y="714.6" width="26.6" height="109.8" fill="#88ad42"/><rect x="1982.7" y="824.4" width="26.6" height="18.7" fill="#324a53"/><rect x="1982.7" y="843.1" width="26.6" height="218.8" fill="#7da4a2"/><rect x="1982.7" y="1061.9" width="26.6" height="38.5" fill="#8f2310"/>
<rect x="2016.6" y="714.9" width="26.6" height="109.5" fill="#88ad42"/><rect x="2016.6" y="824.4" width="26.6" height="18.7" fill="#324a53"/><rect x="2016.6" y="843.1" width="26.6" height="218.2" fill="#7da4a2"/><rect x="2016.6" y="1061.3" width="26.6" height="38.7" fill="#8f2310"/>
<rect x="2050.6" y="715.2" width="26.6" height="109.2" fill="#88ad42"/><rect x="2050.6" y="824.4" width="26.6" height="18.7" fill="#324a53"/><rect x="2050.6" y="843.1" width="26.6" height="217.8" fill="#7da4a2"/><rect x="2050.6" y="1060.9" width="26.6" height="38.9" fill="#8f2310"/>
<rect x="2084.6" y="715.2" width="26.6" height="109.2" fill="#88ad42"/><rect x="2084.6" y="824.4" width="26.6" height="18.7" fill="#324a53"/><rect x="2084.6" y="843.1" width="26.6" height="217.3" fill="#7da4a2"/><rect x="2084.6" y="1060.4" width="26.6" height="39.2" fill="#8f2310"/>
<rect x="2118.5" y="715.2" width="26.6" height="109.2" fill="#88ad42"/><rect x="2118.5" y="824.4" width="26.6" height="18.7" fill="#324a53"/><rect x="2118.5" y="843.1" width="26.6" height="217.3" fill="#7da4a2"/><rect x="2118.5" y="1060.4" width="26.6" height="39.0" fill="#8f2310"/>
<rect x="2152.5" y="715.2" width="26.6" height="109.2" fill="#88ad42"/><rect x="2152.5" y="824.4" width="26.6" height="18.7" fill="#324a53"/><rect x="2152.5" y="843.1" width="26.6" height="217.3" fill="#7da4a2"/><rect x="2152.5" y="1060.4" width="26.6" height="39.0" fill="#8f2310"/>
<circle cx="1314.3" cy="672" r="6.2" fill="#324a53"/>
<circle cx="1495.8" cy="672" r="6.2" fill="#88ad42"/>
<circle cx="1696.4" cy="672" r="6.2" fill="#7da4a2"/>
<circle cx="1836.5" cy="672" r="6.2" fill="#8f2310"/>
<text x="1376.9" y="1143.6" font-size="15.3" fill="#555555" text-anchor="end" transform="rotate(-35 1376.9 1143.6)">2018/03</text>
<text x="1410.9" y="1143.6" font-size="15.3" fill="#555555" text-anchor="end" transform="rotate(-35 1410.9 1143.6)">2018/04</text>
<text x="1444.8" y="1143.6" font-size="15.3" fill="#555555" text-anchor="end" transform="rotate(-35 1444.8 1143.6)">2018/05</text>
<text x="1478.8" y="1143.6" font-size="15.3" fill="#555555" text-anchor="end" transform="rotate(-35 1478.8 1143.6)">2018/06</text>
<text x="1512.8" y="1143.6" font-size="15.3" fill="#555555" text-anchor="end" transform="rotate(-35 1512.8 1143.6)">2018/07</text>
<text x="1546.8" y="1143.6" font-size="15.3" fill="#555555" text-anchor="end" transform="rotate(-35 1546.8 1143.6)">2018/08</text>
<text x="1580.7" y="1143.6" font-size="15.3" fill="#555555" text-anchor="end" transform="rotate(-35 1580.7 1143.6)">2018/09</text>
<text x="1614.7" y="1143.6" font-size="15.3" fill="#555555" text-anchor="end" transform="rotate(-35 1614.7 1143.6)">2018/10</text>
<text x="1648.7" y="1143.6" font-size="15.3" fill="#555555" text-anchor="end" transform="rotate(-35 1648.7 1143.6)">2018/11</text>
<text x="1682.6" y="1143.6" font-size="15.3" fill="#555555" text-anchor="end" transform="rotate(-35 1682.6 1143.6)">2018/12</text>
<text x="1716.6" y="1143.6" font-size="15.3" fill="#555555" text-anchor="end" transform="rotate(-35 1716.6 1143.6)">2019/01</text>
<text x="1750.6" y="1143.6" font-size="15.3" fill="#555555" text-anchor="end" transform="rotate(-35 1750.6 1143.6)">2019/02</text>
<text x="1784.5" y="1143.6" font-size="15.3" fill="#555555" text-anchor="end" transform="rotate(-35 1784.5 1143.6)">2019/03</text>
<text x="1818.5" y="1143.6" font-size="15.3" fill="#555555" text-anchor="end" transform="rotate(-35 1818.5 1143.6)">2019/04</text>
<text x="1852.5" y="1143.6" font-size="15.3" fill="#555555" text-anchor="end" transform="rotate(-35 1852.5 1143.6)">2019/05</text>
<text x="1886.5" y="1143.6" font-size="15.3" fill="#555555" text-anchor="end" transform="rotate(-35 1886.5 1143.6)">2019/06</text>
<text x="1920.4" y="1143.6" font-size="15.3" fill="#555555" text-anchor="end" transform="rotate(-35 1920.4 1143.6)">2019/07</text>
<text x="1954.4" y="1143.6" font-size="15.3" fill="#555555" text-anchor="end" transform="rotate(-35 1954.4 1143.6)">2019/08</text>
<text x="1988.4" y="1143.6" font-size="15.3" fill="#555555" text-anchor="end" transform="rotate(-35 1988.4 1143.6)">2019/09</text>
<text x="2022.3" y="1143.6" font-size="15.3" fill="#555555" text-anchor="end" transform="rotate(-35 2022.3 1143.6)">2019/10</text>
<text x="2056.3" y="1143.6" font-size="15.3" fill="#555555" text-anchor="end" transform="rotate(-35 2056.3 1143.6)">2019/11</text>
<text x="2090.3" y="1143.6" font-size="15.3" fill="#555555" text-anchor="end" transform="rotate(-35 2090.3 1143.6)">2019/12</text>
<text x="2124.2" y="1143.6" font-size="15.3" fill="#555555" text-anchor="end" transform="rotate(-35 2124.2 1143.6)">2020/01</text>
<text x="2158.2" y="1143.6" font-size="15.3" fill="#555555" text-anchor="end" transform="rotate(-35 2158.2 1143.6)">2020/02</text>
</svg>
<span class="t" style="left:1323.6px;top:664.3px;font-size:16.2px;color:#3b3a39;transform:scaleX(0.9325);">PYSYVÄT VASTAAVAT</span>
<span class="t" style="left:1504.9px;top:664.3px;font-size:16.2px;color:#3b3a39;transform:scaleX(0.9724);">VAIHTUVAT VASTAAVAT</span>
<span class="t" style="left:1705.7px;top:664.3px;font-size:16.2px;letter-spacing:0.665px;color:#3b3a39;">OMA PÄÄOMA</span>
<span class="t" style="left:1846.6px;top:664.3px;font-size:16.2px;color:#3b3a39;transform:scaleX(0.9719);">VIERAS PÄÄOMA</span>
<span class="t" style="left:1313.7px;top:694.2px;font-size:16px;color:#555555;">20M</span>
<span class="t" style="left:1313.7px;top:765.1px;font-size:16px;color:#555555;">10M</span>
<span class="t" style="left:1322.6px;top:835.7px;font-size:16px;color:#555555;">0M</span>
<span class="t" style="left:1308.3px;top:906.4px;font-size:16px;color:#555555;">-10M</span>
<span class="t" style="left:1308.3px;top:977.0px;font-size:16px;color:#555555;">-20M</span>
<span class="t" style="left:1308.3px;top:1047.7px;font-size:16px;color:#555555;">-30M</span>
<span class="t" style="left:1308.3px;top:1118.2px;font-size:16px;color:#555555;">-40M</span>
</section>
</main>
<!--TABS-->
<footer>
<div class="abs" style="left:0px;top:1223px;width:2560.0px;height:46.0px;background:#eaeaea;"></div>
<div class="abs" style="left:1937.5px;top:1223px;width:86.0px;height:46.0px;background:#fff;"></div>
<div class="abs" style="left:1937.5px;top:1267.4px;width:86.0px;height:1.6px;background:#f2c811;"></div>
<div class="abs" style="left:46.5px;top:1223px;width:1.6px;height:46.0px;background:#6a6a6a;"></div>
<i class="abs" style="left:154.25px;top:1223px;width:1.5px;height:46px;background:#c6c6c6"></i><i class="abs" style="left:289.75px;top:1223px;width:1.5px;height:46px;background:#c6c6c6"></i><i class="abs" style="left:445.75px;top:1223px;width:1.5px;height:46px;background:#c6c6c6"></i><i class="abs" style="left:638.25px;top:1223px;width:1.5px;height:46px;background:#c6c6c6"></i><i class="abs" style="left:866.75px;top:1223px;width:1.5px;height:46px;background:#c6c6c6"></i><i class="abs" style="left:1122.75px;top:1223px;width:1.5px;height:46px;background:#c6c6c6"></i><i class="abs" style="left:1481.75px;top:1223px;width:1.5px;height:46px;background:#c6c6c6"></i><i class="abs" style="left:1716.75px;top:1223px;width:1.5px;height:46px;background:#c6c6c6"></i><i class="abs" style="left:1936.75px;top:1223px;width:1.5px;height:46px;background:#c6c6c6"></i><i class="abs" style="left:2022.75px;top:1223px;width:1.5px;height:46px;background:#c6c6c6"></i><i class="abs" style="left:2180.75px;top:1223px;width:1.5px;height:46px;background:#c6c6c6"></i><i class="abs" style="left:2305.75px;top:1223px;width:1.5px;height:46px;background:#c6c6c6"></i><i class="abs" style="left:2475.75px;top:1223px;width:1.5px;height:46px;background:#c6c6c6"></i>
<svg class="abs" style="left:0;top:1238px" width="44" height="20" viewBox="0 1238 44 20"><path d="M7.6 1242.5V1252.5L2.6 1247.5Z" fill="#cfcfcf"/><path d="M31.4 1242V1253L37.6 1247.5Z" fill="#0c0c14"/></svg>
<span class="t" style="left:74.4px;top:1240.8px;font-size:15.5px;letter-spacing:0.440px;color:#4d535b;-webkit-text-stroke-width:0.45px;">Etusivu</span>
<span class="t" style="left:182.7px;top:1240.8px;font-size:15.5px;letter-spacing:0.495px;color:#4d535b;-webkit-text-stroke-width:0.45px;">Dashboard</span>
<span class="t" style="left:317.4px;top:1240.8px;font-size:15.5px;letter-spacing:0.299px;color:#4d535b;-webkit-text-stroke-width:0.45px;">Tuloslaskelma</span>
<span class="t" style="left:474.4px;top:1240.8px;font-size:15.5px;letter-spacing:0.435px;color:#4d535b;-webkit-text-stroke-width:0.45px;">Liikevaihto &amp; Tulos</span>
<span class="t" style="left:666.4px;top:1240.8px;font-size:15.5px;letter-spacing:0.336px;color:#4d535b;-webkit-text-stroke-width:0.45px;">Tuloslaskelma per kausi</span>
<span class="t" style="left:894.4px;top:1240.8px;font-size:15.5px;letter-spacing:0.422px;color:#4d535b;-webkit-text-stroke-width:0.45px;">Tuloslaskelma per dimensio</span>
<span class="t" style="left:1151.4px;top:1240.8px;font-size:15.5px;letter-spacing:0.392px;color:#4d535b;-webkit-text-stroke-width:0.45px;">Tuloslaskelma dimensioittain vs. ed. kausi</span>
<span class="t" style="left:1510.4px;top:1240.8px;font-size:15.5px;letter-spacing:0.599px;color:#4d535b;-webkit-text-stroke-width:0.45px;">Liikevaihto per dimensio</span>
<span class="t" style="left:1744.4px;top:1240.8px;font-size:15.5px;letter-spacing:0.376px;color:#4d535b;-webkit-text-stroke-width:0.45px;">Liikevaihto per asiakas</span>
<span class="t" style="left:1963.4px;top:1240.8px;font-size:15.5px;letter-spacing:0.112px;color:#4d535b;-webkit-text-stroke-width:0.45px;">Tase</span>
<span class="t" style="left:2050.9px;top:1240.8px;font-size:15.5px;letter-spacing:0.202px;color:#4d535b;-webkit-text-stroke-width:0.45px;">Tase per kausi</span>
<span class="t" style="left:2207.9px;top:1240.8px;font-size:15.5px;letter-spacing:0.638px;color:#4d535b;-webkit-text-stroke-width:0.45px;">Ostovelat</span>
<span class="t" style="left:2333.4px;top:1240.8px;font-size:15.5px;letter-spacing:0.636px;color:#4d535b;-webkit-text-stroke-width:0.45px;">Myyntisaamiset</span>
<span class="t" style="left:2503.3px;top:1240.8px;font-size:15.5px;letter-spacing:0.775px;color:#4d535b;-webkit-text-stroke-width:0.45px;transform:scaleX(1.0614);">Käyttöpääoma</span>
</footer>
</body></html>
